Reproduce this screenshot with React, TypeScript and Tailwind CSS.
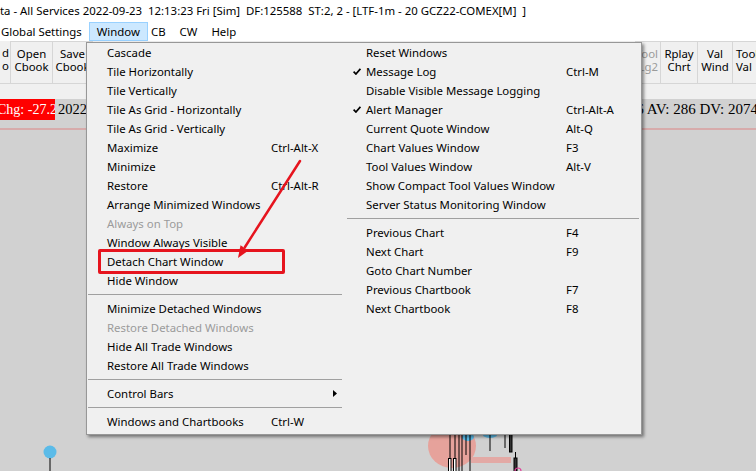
import React from "react";

type Item = {
  label?: string;
  shortcut?: string;
  check?: boolean;
  disabled?: boolean;
  sep?: boolean;
  sub?: boolean;
};

const leftItems: Item[] = [
  { label: "Cascade" },
  { label: "Tile Horizontally" },
  { label: "Tile Vertically" },
  { label: "Tile As Grid - Horizontally" },
  { label: "Tile As Grid - Vertically" },
  { label: "Maximize", shortcut: "Ctrl-Alt-X" },
  { label: "Minimize" },
  { label: "Restore", shortcut: "Ctrl-Alt-R" },
  { label: "Arrange Minimized Windows" },
  { label: "Always on Top", disabled: true },
  { label: "Window Always Visible" },
  { label: "Detach Chart Window" },
  { label: "Hide Window" },
  { sep: true },
  { label: "Minimize Detached Windows" },
  { label: "Restore Detached Windows", disabled: true },
  { label: "Hide All Trade Windows" },
  { label: "Restore All Trade Windows" },
  { sep: true },
  { label: "Control Bars", sub: true },
  { sep: true },
  { label: "Windows and Chartbooks", shortcut: "Ctrl-W" },
];

const rightItems: Item[] = [
  { label: "Reset Windows" },
  { label: "Message Log", shortcut: "Ctrl-M", check: true },
  { label: "Disable Visible Message Logging" },
  { label: "Alert Manager", shortcut: "Ctrl-Alt-A", check: true },
  { label: "Current Quote Window", shortcut: "Alt-Q" },
  { label: "Chart Values Window", shortcut: "F3" },
  { label: "Tool Values Window", shortcut: "Alt-V" },
  { label: "Show Compact Tool Values Window" },
  { label: "Server Status Monitoring Window" },
  { sep: true },
  { label: "Previous Chart", shortcut: "F4" },
  { label: "Next Chart", shortcut: "F9" },
  { label: "Goto Chart Number" },
  { label: "Previous Chartbook", shortcut: "F7" },
  { label: "Next Chartbook", shortcut: "F8" },
];

const Check = () => (
  <svg width="8" height="7" viewBox="0 0 8 7">
    <path d="M0.6 3.6 L2.9 6 L7.4 0.8" stroke="#000" strokeWidth="1.7" fill="none" />
  </svg>
);

const MenuColumn = ({ items, right }: { items: Item[]; right?: boolean }) => {
  return (
    <div className={right ? "flex flex-col flex-1" : "flex flex-col w-[258px]"}>
      {items.map((it, i) =>
        it.sep ? (
          <div key={i} className={right ? "h-[9px] flex items-center ml-[2px] mr-[2px]" : "h-[9px] flex items-center ml-[1px] mr-[3px]"}>
            <div className="h-px w-full bg-[#a0a0a0]"></div>
          </div>
        ) : (
          <div
            key={i}
            className={
              (right ? "grid grid-cols-[21px_200px_1fr]" : "grid grid-cols-[20px_164px_1fr]") +
              " h-[19px] items-center whitespace-nowrap " +
              (it.disabled ? "text-[#9b9b9b]" : "text-black")
            }
          >
            <div className="pl-[8px] flex items-center">{it.check && <Check />}</div>
            <div>{it.label}</div>
            <div className="flex items-center">
              {it.shortcut}
              {it.sub && (
                <svg className="ml-[62px]" width="4" height="7" viewBox="0 0 4 7">
                  <path d="M0 0 L4 3.5 L0 7 Z" fill="#000" />
                </svg>
              )}
            </div>
          </div>
        )
      )}
    </div>
  );
};

const ToolButton = ({ top, bottom, className, muted }: { top: string; bottom: string; className: string; muted?: boolean }) => (
  <div
    className={
      "h-[43px] pt-[5px] border border-[#d6d6d6] flex flex-col items-center justify-start leading-[13px] overflow-hidden whitespace-nowrap " +
      (muted ? "text-[#9b9b9b] " : "text-black ") +
      className
    }
  >
    <span>{top}</span>
    <span>{bottom}</span>
  </div>
);

const App = () => {
  return (
    <div className="relative w-[756px] h-[471px] overflow-hidden flex flex-col bg-[#d1d1d1] font-['Noto_Sans',sans-serif] text-[11.4px]">
      {/* TITLE BAR */}
      <div className="h-[22px] bg-white flex items-center whitespace-pre text-black shrink-0">
        ta - All Services 2022-09-23  12:13:23 Fri [Sim]  DF:125588  ST:2, 2 - [LTF-1m - 20 GCZ22-COMEX[M]  ]
      </div>
      {/* MENU BAR */}
      <div className="h-[19px] bg-white flex items-stretch text-black shrink-0">
        <div className="pl-[1px] pr-[7px] flex items-center">Global Settings</div>
        <div className="px-[7px] flex items-center bg-[#cce8ff] border border-[#99d1ff]">Window</div>
        <div className="pl-[3px] pr-[8px] flex items-center">CB</div>
        <div className="px-[6px] flex items-center">CW</div>
        <div className="px-[8px] flex items-center">Help</div>
      </div>
      {/* TOOLBAR */}
      <div className="h-[58px] bg-[#f0f0f0] flex justify-between items-start shrink-0">
        <div className="flex">
          <div className="h-[43px] w-[11px] pt-[5px] border-r border-b border-[#d6d6d6] flex flex-col items-end leading-[13px] pr-[1px] overflow-hidden">
            <span>d</span>
            <span>o</span>
          </div>
          <ToolButton top="Open" bottom="Cbook" className="w-[42px] border-l-0" />
          <ToolButton top="Save" bottom="Cbook" className="w-[40px] border-l-0" />
        </div>
        <div className="flex">
          <ToolButton top="Tool" bottom="Lg2" className="w-[26px] items-end pr-[2px]" muted />
          <ToolButton top="Rplay" bottom="Chrt" className="w-[37px] border-l-0" />
          <ToolButton top="Val" bottom="Wind" className="w-[35px] border-l-0" />
          <ToolButton top="Tool" bottom="Val" className="w-[23px] border-l-0 border-r-0 items-start pl-[3px]" />
        </div>
      </div>
      {/* CHART */}
      <div className="relative flex-1 flex flex-col font-['Liberation_Serif',serif] text-[14px]">
        <div className="h-[21px] flex items-center justify-between whitespace-nowrap">
          <div className="flex items-center h-full">
            <div className="h-full w-[55px] bg-[#ff0000] text-white flex items-center overflow-hidden">
              <span className="-ml-[3px]">Chg: -27.2</span>
            </div>
            <div className="ml-[3px] text-black text-[14.5px]">2022</div>
          </div>
          <div className="text-black text-[15px] -mr-[2px]">6 AV: 286 DV: 2074</div>
        </div>
        <div className="mt-[8px] h-[2px] bg-[#d7abab]"></div>
        <svg className="absolute left-0 top-0" width="756" height="372" viewBox="0 99 756 372">
          <circle cx="50" cy="452" r="6.5" fill="#5bbbe8" />
          <line x1="50" y1="458" x2="50" y2="471" stroke="#000" strokeWidth="1" />
          <ellipse cx="452" cy="446" rx="24" ry="22" fill="#e6a29b" />
          <ellipse cx="468" cy="437" rx="6" ry="4" fill="#5bbbe8" />
          <ellipse cx="490" cy="435" rx="7" ry="3" fill="#5bbbe8" />
          <rect x="471" y="457" width="40" height="6" fill="#e3a9a5" />
          <line x1="450" y1="434" x2="450" y2="471" stroke="#000" />
          <line x1="455" y1="434" x2="455" y2="471" stroke="#000" />
          <line x1="459" y1="434" x2="459" y2="471" stroke="#000" />
          <line x1="462" y1="434" x2="462" y2="471" stroke="#000" />
          <line x1="466" y1="434" x2="466" y2="455" stroke="#000" />
          <line x1="470" y1="434" x2="470" y2="471" stroke="#000" />
          <rect x="448.5" y="458.5" width="2.5" height="13" fill="#fff" stroke="#000" />
          <rect x="453.5" y="458.5" width="2.5" height="13" fill="#fff" stroke="#000" />
          <line x1="490" y1="434" x2="490" y2="451" stroke="#000" />
          <line x1="505" y1="434" x2="505" y2="448" stroke="#000" />
          <rect x="509.5" y="434" width="2.5" height="18" fill="#333" stroke="#000" />
          <line x1="515.5" y1="452" x2="515.5" y2="471" stroke="#000" />
          <rect x="514" y="458" width="3" height="13" fill="#333" stroke="#000" />
          <circle cx="518" cy="471" r="3" fill="none" stroke="#e0409a" strokeWidth="1.2" />
        </svg>
      </div>

      {/* DROPDOWN MENU */}
      <div className="absolute left-[86px] top-[42px] w-[556px] bg-[#f0f0f0] border border-[#979797] shadow-[2px_2px_3px_rgba(0,0,0,0.45)] flex pb-[3px] font-['Noto_Sans',sans-serif] text-[11.4px]">
        <MenuColumn items={leftItems} />
        <MenuColumn items={rightItems} right />
      </div>

      {/* ANNOTATION */}
      <div className="absolute left-[98px] top-[249px] w-[187px] h-[25px] border-[3px] border-[#e6141e] rounded-[2px]"></div>
      <svg className="absolute left-0 top-0 pointer-events-none" width="756" height="471">
        <line x1="300" y1="161" x2="245" y2="247" stroke="#e6141e" strokeWidth="2.5" strokeLinecap="round" />
        <path d="M238 258 L248.5 250.5 L240.5 245.3 Z" fill="#e6141e" />
      </svg>
    </div>
  );
};

export default App;
